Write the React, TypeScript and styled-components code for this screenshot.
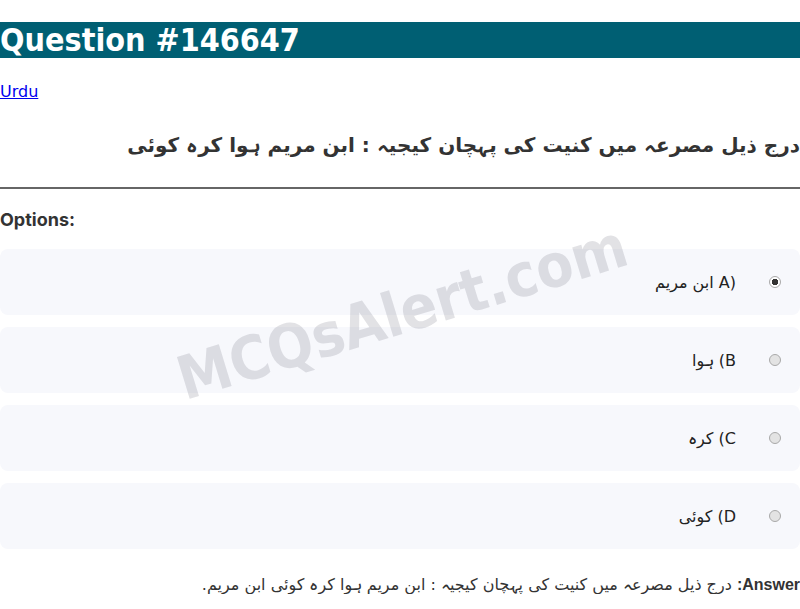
import React, {FC} from 'react'
import styled, {createGlobalStyle} from 'styled-components'

const GlobalStyle = createGlobalStyle`
  body {
    margin: 0;
    font-family: "DejaVu Sans", sans-serif;
    background: #fff;
  }
`;

const Page = styled.div`
  position: relative;
  overflow: hidden;
`;
const Title = styled.h1`
  margin: 22px 0 24px;
  background: #005f73;
  color: #fff;
  font-family: "DejaVu Sans Condensed", "DejaVu Sans", sans-serif;
  font-size: 32px;
  line-height: 36px;
  font-weight: bold;
`;
const LangLink = styled.a`
  color: #0000ee;
  font-size: 16px;
`;
const QuestionText = styled.h2`
  direction: rtl;
  text-align: right;
  margin: 32px 0 30px;
  font-size: 20px;
  font-weight: bold;
  color: #333;
`;
const Divider = styled.div`
  height: 2px;
  background: #666;
`;
const OptionsLabel = styled.h3`
  margin: 20px 0 19px;
  font-family: Inter, "Open Sans", sans-serif;
  font-size: 18px;
  font-weight: 700;
  color: #333;
`;
const OptionList = styled.div`
  display: flex;
  flex-direction: column;
  gap: 12px;
`;
const OptionCard = styled.label`
  direction: rtl;
  display: flex;
  align-items: center;
  height: 66px;
  padding-right: 19px;
  background: #f7f8fc;
  border-radius: 8px;
  font-size: 16px;
  color: #222;
`;
const Radio = styled.input`
  appearance: none;
  margin: 0;
  width: 12px;
  height: 12px;
  border-radius: 50%;
  border: 1px solid #a9a9a9;
  background: #e3e3e3;
  box-sizing: border-box;
  &:checked {
    background: radial-gradient(circle, #333 0 3px, #fff 3.5px);
  }
`;
const OptionText = styled.span`
  margin-right: 33px;
`;
const Prefix = styled.span<{$ltr?: boolean}>`
  direction: ${p => (p.$ltr ? 'ltr' : 'inherit')};
  unicode-bidi: ${p => (p.$ltr ? 'isolate' : 'normal')};
`;
const Answer = styled.p`
  direction: rtl;
  text-align: right;
  margin: 26px 0 0;
  font-size: 16px;
  color: #333;
  white-space: nowrap;
`;
const AnswerLabel = styled.b`
  font-family: "Liberation Sans", Arial, sans-serif;
`;
const Watermark = styled.div`
  position: absolute;
  left: 402px;
  top: 312px;
  transform: translate(-50%, -50%) rotate(-17deg);
  font-family: "DejaVu Sans Condensed", "DejaVu Sans", sans-serif;
  font-size: 60px;
  font-weight: bold;
  color: rgba(110, 110, 125, 0.2);
  white-space: nowrap;
  pointer-events: none;
`;

type Option = {
    letter: string
    text: string
    checked?: boolean
}

const options: Option[] = [
    {letter: 'A', text: 'ابن مریم', checked: true},
    {letter: 'B', text: 'ہوا'},
    {letter: 'C', text: 'کرہ'},
    {letter: 'D', text: 'کوئی'},
]

const App: FC = () => {
    return (
        <Page>
            <GlobalStyle/>
            <Title>Question #146647</Title>
            <LangLink href="#">Urdu</LangLink>
            <QuestionText>درج ذیل مصرعہ میں کنیت کی پہچان کیجیہ : ابن مریم ہوا کرہ کوئی</QuestionText>
            <Divider/>
            <OptionsLabel>Options:</OptionsLabel>
            <OptionList>
                {options.map((o) => (
                    <OptionCard key={o.letter}>
                        <Radio type="radio" name="opt" readOnly defaultChecked={o.checked}/>
                        <OptionText>
                            <Prefix $ltr={o.checked}>{o.letter})</Prefix> {o.text}
                        </OptionText>
                    </OptionCard>
                ))}
            </OptionList>
            <Answer>
                <AnswerLabel>Answer:</AnswerLabel> درج ذیل مصرعہ میں کنیت کی پہچان کیجیہ : ابن مریم ہوا کرہ کوئی ابن مریم.
            </Answer>
            <Watermark>MCQsAlert.com</Watermark>
        </Page>
    )
}

export default App
